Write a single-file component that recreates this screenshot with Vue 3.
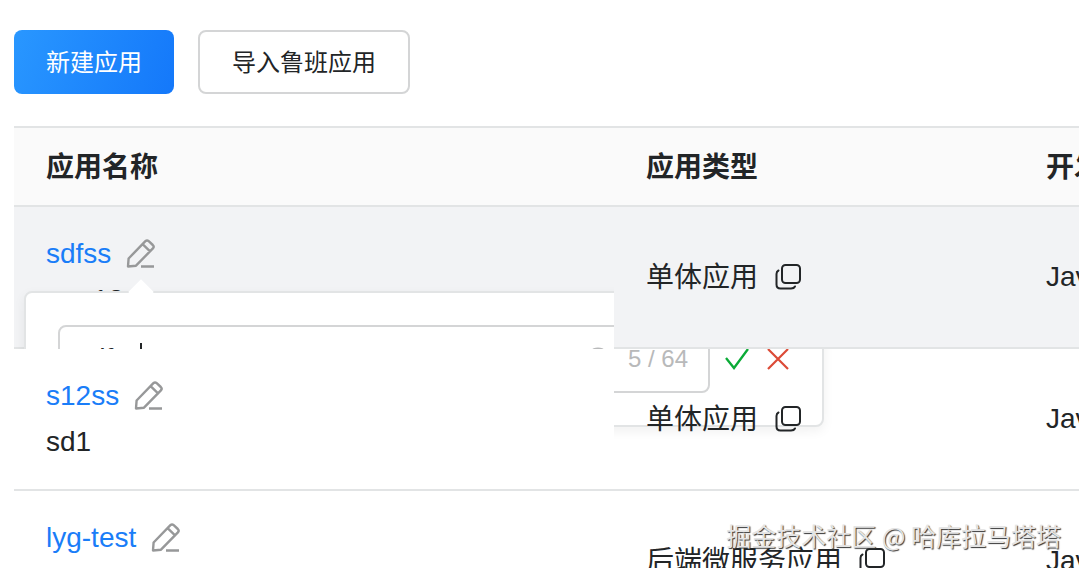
<script setup>
const rows = [
  { name: 'sdfss', desc: 'aaa12', type: '单体应用', lang: 'Java', active: true },
  { name: 's12ss', desc: 'sd1', type: '单体应用', lang: 'Java' },
  { name: 'lyg-test', desc: 'lyg', type: '后端微服务应用', lang: 'Java' },
]
</script>

<template>
  <main class="page">
    <div class="toolbar">
      <button type="button" class="btn primary">新建应用</button>
      <button type="button" class="btn">导入鲁班应用</button>
    </div>
    <table class="grid">
      <colgroup>
        <col class="c-name" />
        <col class="c-type" />
        <col class="c-lang" />
      </colgroup>
      <thead>
        <tr>
          <th>应用名称</th>
          <th>应用类型</th>
          <th>开发语言</th>
        </tr>
      </thead>
      <tbody>
        <tr v-for="row in rows" :key="row.name" :class="{ active: row.active }">
          <td class="name">
            <div class="line">
              <a href="#">{{ row.name }}</a>
              <button type="button" class="icon" aria-label="编辑">
                <svg width="32" height="32" viewBox="0 0 32 32" fill="none" stroke="#979899" stroke-width="2.4" stroke-linejoin="round">
                  <path d="M3 28.500 3.600 20.500 20.400 3.200Q22 1.700 23.700 3.200L27.800 7Q29.500 8.700 27.900 10.400L11 27.700ZM17.600 6.200 24.800 13.200M16 28.500H29" />
                </svg>
              </button>
            </div>
            <div class="line">{{ row.desc }}</div>
            <div v-if="row.active" class="popover">
              <label class="field">
                <input type="text" value="sdfss" aria-label="应用名称" />
                <i class="caret"></i>
                <svg width="24" height="24" viewBox="0 0 24 24" fill="none" stroke="#b8b9ba" stroke-width="2">
                  <circle cx="12" cy="12" r="10.500" />
                  <path d="m8 8 8 8m0-8-8 8" />
                </svg>
                <span>5 / 64</span>
              </label>
              <button type="button" class="icon" aria-label="确定">
                <svg width="28" height="28" viewBox="0 0 28 28" fill="none" stroke="#0bab37" stroke-width="2.3"><path d="m3 13 8 10L25 4" /></svg>
              </button>
              <button type="button" class="icon" aria-label="取消">
                <svg width="28" height="28" viewBox="0 0 28 28" fill="none" stroke="#dc4a36" stroke-width="2.2"><path d="m4 4 20 20M24 4 4 24" /></svg>
              </button>
            </div>
          </td>
          <td class="type">
            <div class="line">
              {{ row.type }}
              <button type="button" class="icon" aria-label="复制">
                <svg width="28" height="28" viewBox="0 0 28 28" fill="none" stroke="#222527" stroke-width="2" stroke-linecap="round">
                  <rect x="8" y="1" width="18" height="18" rx="3.500" />
                  <path d="M4.500 6.500Q2.500 7.500 2.500 10V20.500Q2.500 24.500 6.500 24.500H17Q20 24.500 21 22.500" />
                </svg>
              </button>
            </div>
          </td>
          <td>{{ row.lang }}</td>
        </tr>
      </tbody>
    </table>
    <div class="watermark">掘金技术社区 @ 哈库拉马塔塔</div>
  </main>
</template>

<style>
body {
  overflow: hidden;
}
</style>

<style scoped>
.page {
  height: 100vh;
  box-sizing: border-box;
  padding: 30px 0 0 14px;
  overflow: hidden;
  position: relative;
  background: #fff;
  color: #222527;
  font: 28px/46px "Liberation Sans", "Noto Sans CJK SC", sans-serif;
}
.toolbar {
  display: flex;
  gap: 24px;
  margin-bottom: 32px;
}
.btn {
  height: 64px;
  padding: 2px 32px 0;
  box-sizing: border-box;
  border: 2px solid #d4d5d6;
  border-radius: 8px;
  background: #fff;
  color: inherit;
  font: 24px/36px "Liberation Sans", "Noto Sans CJK SC", sans-serif;
}
.primary {
  border: 0;
  background: linear-gradient(110deg, #2997ff, #1478fa);
  color: #fff;
}
.grid {
  table-layout: fixed;
  width: 100%;
  min-width: 1400px;
  border-spacing: 0;
}
.c-name {
  width: 600px;
}
.c-type {
  width: 400px;
}
th,
td {
  box-sizing: border-box;
  padding: 0 32px;
  border-bottom: 2px solid #e2e4e5;
  text-align: left;
}
th {
  height: 81px;
  padding-top: 2px;
  border-top: 2px solid #e2e4e5;
  background: #fafafa;
  font-weight: 700;
}
td {
  height: 142px;
  position: relative;
  z-index: 2;
}
.name {
  background: #fff;
}
.active td {
  background: #f2f3f5;
}
.active .name {
  z-index: 1;
}
.line {
  display: flex;
  align-items: center;
  gap: 14px;
  white-space: nowrap;
}
.type {
  padding-top: 2px;
}
.type .line {
  gap: 16px;
}
a {
  color: #1a7df8;
  text-decoration: none;
}
.icon {
  display: flex;
  padding: 0;
  border: 0;
  background: none;
}
.popover {
  position: absolute;
  top: 84px;
  left: 10px;
  width: 800px;
  height: 136px;
  box-sizing: border-box;
  padding: 32px;
  display: flex;
  align-items: center;
  gap: 13px;
  border: 2px solid #e2e4e5;
  border-radius: 8px;
  background: #fff;
  box-shadow: 0 4px 12px rgba(0, 0, 0, 0.06);
}
.popover::before {
  content: "";
  position: absolute;
  top: -10px;
  left: 106px;
  width: 18px;
  height: 18px;
  transform: rotate(45deg);
  background: #fff;
}
.field {
  position: relative;
  flex: none;
  width: 652px;
  height: 68px;
  box-sizing: border-box;
  display: flex;
  align-items: center;
  gap: 18px;
  padding: 0 20px 0 16px;
  border: 2px solid #d4d5d6;
  border-radius: 8px;
  color: #b8b9ba;
  font-size: 24px;
}
.field input {
  flex: 1;
  min-width: 0;
  padding: 0;
  border: 0;
  outline: 0;
  background: none;
  color: #222527;
  font: inherit;
  font-size: 28px;
}
.caret {
  position: absolute;
  left: 80px;
  top: 16px;
  width: 2px;
  height: 32px;
  background: #222527;
}
.watermark {
  position: absolute;
  z-index: 3;
  right: 18px;
  bottom: 10px;
  color: #e4e4e4;
  font-family: "Noto Sans CJK SC", sans-serif;
  font-size: 25px;
  line-height: 46px;
  text-shadow: 1px 1px 1px #333;
}
</style>
